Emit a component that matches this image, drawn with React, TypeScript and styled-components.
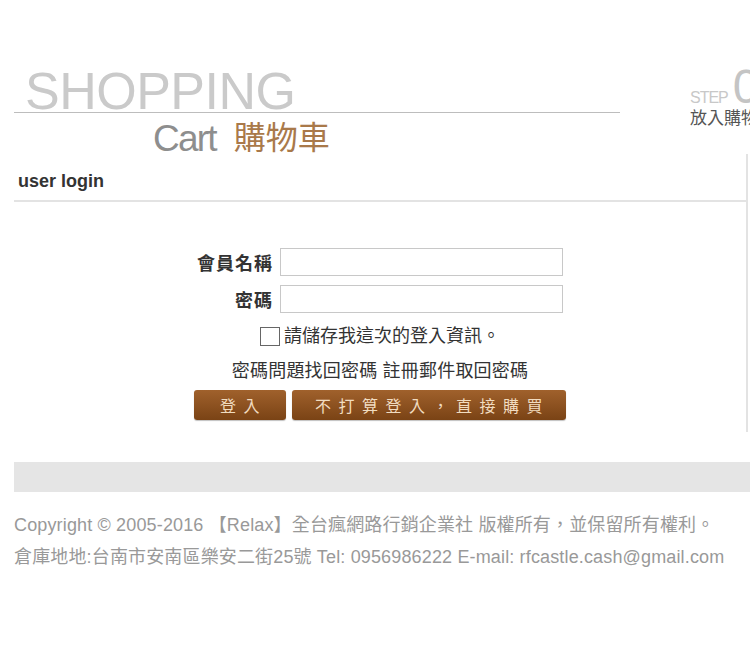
import styled, { createGlobalStyle } from "styled-components";

const GlobalStyle = createGlobalStyle`
  html, body {
    margin: 0;
    padding: 0;
    background: #fff;
    overflow: hidden;
  }
  body {
    font-family: "Liberation Sans", "Noto Sans CJK TC", sans-serif;
  }
`;

function App() {
  return (
    <Page>
      <GlobalStyle />
      <Header>
        <Logo>
          <Shopping>SHOPPING</Shopping>
          <CartRow>
            <Cart>Cart</Cart>
            <CartCn>購物車</CartCn>
          </CartRow>
        </Logo>
        <Step>
          <StepTop>
            <StepLabel>STEP</StepLabel>
            <StepNum>01</StepNum>
          </StepTop>
          <StepText>放入購物車</StepText>
        </Step>
      </Header>

      <Box>
        <BoxHead>user login</BoxHead>
        <LoginForm onSubmit={(e) => e.preventDefault()}>
          <Fields>
            <Label htmlFor="member">會員名稱</Label>
            <Input id="member" type="text" />
            <Label htmlFor="pwd">密碼</Label>
            <Input id="pwd" type="password" />
          </Fields>
          <Remember>
            <Check type="checkbox" />
            請儲存我這次的登入資訊。
          </Remember>
          <Links>
            <LinkText href="#">密碼問題找回密碼</LinkText>{" "}
            <LinkText href="#">註冊郵件取回密碼</LinkText>
          </Links>
          <Buttons>
            <BrownButton $width={92}>登入</BrownButton>
            <BrownButton $width={274} type="button">
              不打算登入，直接購買
            </BrownButton>
          </Buttons>
        </LoginForm>
      </Box>

      <Bar />
      <Footer>
        <div>
          Copyright © 2005-2016 【Relax】全台瘋網路行銷企業社 版權所有，並保留所有權利。
        </div>
        <div>
          倉庫地地:台南市安南區樂安二街25號 Tel: 0956986222 E-mail:
          rfcastle.cash@gmail.com
        </div>
      </Footer>
    </Page>
  );
}

const Page = styled.div`
  width: 1000px;
  padding: 66px 0 0 14px;
`;

const Header = styled.div`
  display: flex;
  align-items: flex-start;
`;

const Logo = styled.div`
  width: 606px;
  padding-top: 4px;
`;

const Shopping = styled.div`
  font-size: 52px;
  line-height: 42px;
  letter-spacing: -0.5px;
  color: #cacaca;
  padding-left: 11px;
  border-bottom: 1px solid #bdbdbd;
`;

const CartRow = styled.div`
  display: flex;
  align-items: flex-start;
  margin: 11px 0 0 139px;
`;

const Cart = styled.span`
  font-size: 37px;
  line-height: 30px;
  letter-spacing: -1.8px;
  color: #8e8e8e;
`;

const CartCn = styled.span`
  font-family: "Noto Sans CJK TC", sans-serif;
  font-size: 32px;
  line-height: 30px;
  margin: -4px 0 0 18px;
  color: #a9794a;
`;

const Step = styled.div`
  margin-left: 70px;
  display: flex;
  flex-direction: column;
`;

const StepTop = styled.div`
  display: flex;
  align-items: baseline;
`;

const StepLabel = styled.span`
  font-size: 16px;
  letter-spacing: -1px;
  color: #c8c8c8;
`;

const StepNum = styled.span`
  font-size: 48px;
  line-height: 42px;
  color: #c4c4c4;
  margin-left: 5px;
`;

const StepText = styled.div`
  font-size: 17px;
  line-height: 20px;
  margin-top: 1px;
  color: #555;
  white-space: nowrap;
`;

const Box = styled.div`
  width: 732px;
  border-right: 2px solid #e3e3e3;
`;

const BoxHead = styled.div`
  padding: 17px 0 9px 4px;
  font-size: 18px;
  font-weight: bold;
  line-height: 20px;
  color: #333;
  border-bottom: 2px solid #e3e3e3;
`;

const LoginForm = styled.form`
  display: flex;
  flex-direction: column;
  align-items: center;
  padding: 46px 0 12px;
`;

const Fields = styled.div`
  display: grid;
  grid-template-columns: auto 283px;
  column-gap: 7px;
  row-gap: 9px;
  align-items: center;
`;

const Label = styled.label`
  font-size: 18px;
  font-weight: bold;
  letter-spacing: 1px;
  color: #333;
  text-align: right;
`;

const Input = styled.input`
  box-sizing: border-box;
  height: 28px;
  margin: 0;
  border: 1px solid #c8c8c8;
  background: #fff;
  outline: none;
`;

const Remember = styled.label`
  margin-top: 11px;
  display: flex;
  align-items: center;
  gap: 4px;
  font-size: 18px;
  line-height: 24px;
  color: #333;
`;

const Check = styled.input`
  appearance: none;
  box-sizing: border-box;
  width: 20px;
  height: 19px;
  margin: 0;
  border: 1px solid #666;
  background: #fff;
`;

const Links = styled.div`
  margin-top: 11px;
  font-size: 18px;
  line-height: 24px;
  letter-spacing: 0.2px;
`;

const LinkText = styled.a`
  color: #333;
  text-decoration: none;
`;

const Buttons = styled.div`
  margin-top: 7px;
  display: flex;
  gap: 6px;
`;

const BrownButton = styled.button<{ $width: number }>`
  width: ${(p) => p.$width}px;
  height: 30px;
  padding: 0 0 0 7px;
  border: none;
  border-radius: 3px;
  background: linear-gradient(#a0612c, #7a4315);
  box-shadow: 0 1px 1px rgba(0, 0, 0, 0.25);
  color: #f1dcc0;
  font-family: "Noto Sans CJK TC", sans-serif;
  font-size: 16px;
  letter-spacing: 7.5px;
  cursor: pointer;
`;

const Bar = styled.div`
  margin-top: 30px;
  width: 960px;
  height: 30px;
  background: #e5e5e5;
`;

const Footer = styled.div`
  margin-top: 17px;
  font-size: 18px;
  line-height: 32px;
  letter-spacing: 0.15px;
  color: #999;
  white-space: nowrap;
`;

export default App;
